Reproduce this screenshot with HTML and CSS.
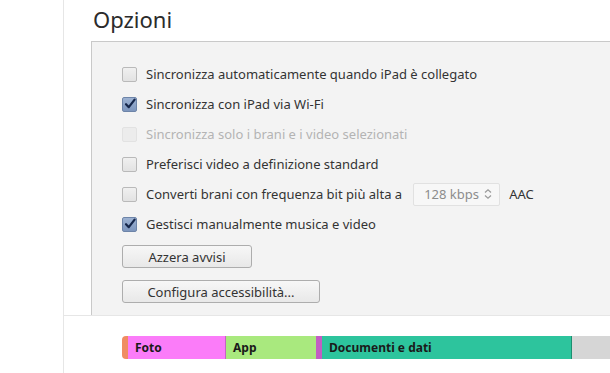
FILE: index.html
```html
<!DOCTYPE html>
<html lang="it">
<head>
    <meta charset="UTF-8">
    <meta name="viewport" content="width=device-width, initial-scale=1.0">
    <title>Opzioni</title>
    <link rel="stylesheet" href="styles.css">
</head>
<body>

<div class="page">
    <div class="sidebar"></div>

    <div class="main">
        <h2 class="title">Opzioni</h2>

        <div class="panel">
            <div class="option">
                <span class="check"></span>
                <span class="label">Sincronizza automaticamente quando iPad è collegato</span>
            </div>
            <div class="option">
                <span class="check checked">
                    <svg viewBox="0 0 14 14" width="14" height="14"><path d="M3 7.2 L5.8 10.2 L11.6 2.6" fill="none" stroke="#15264a" stroke-width="2.2" stroke-linecap="round" stroke-linejoin="round"/></svg>
                </span>
                <span class="label">Sincronizza con iPad via Wi-Fi</span>
            </div>
            <div class="option disabled">
                <span class="check"></span>
                <span class="label">Sincronizza solo i brani e i video selezionati</span>
            </div>
            <div class="option">
                <span class="check"></span>
                <span class="label">Preferisci video a definizione standard</span>
            </div>
            <div class="option">
                <span class="check"></span>
                <span class="label">Converti brani con frequenza bit più alta a</span>
                <span class="select">
                    <span class="select-value">128 kbps</span>
                    <svg viewBox="0 0 10 12" width="10" height="12"><path d="M2 4.5 L5 1.8 L8 4.5 M2 7.5 L5 10.2 L8 7.5" fill="none" stroke="#9a9a9a" stroke-width="1.2"/></svg>
                </span>
                <span class="label">AAC</span>
            </div>
            <div class="option">
                <span class="check checked">
                    <svg viewBox="0 0 14 14" width="14" height="14"><path d="M3 7.2 L5.8 10.2 L11.6 2.6" fill="none" stroke="#15264a" stroke-width="2.2" stroke-linecap="round" stroke-linejoin="round"/></svg>
                </span>
                <span class="label">Gestisci manualmente musica e video</span>
            </div>

            <div class="buttons">
                <button type="button" class="btn btn-small">Azzera avvisi</button>
                <button type="button" class="btn btn-wide">Configura accessibilità...</button>
            </div>
        </div>

        <div class="capacity">
            <div class="bar">
                <span class="seg seg-audio"></span>
                <span class="seg seg-photo" style="width: 98px">Foto</span>
                <span class="seg seg-app" style="width: 90px">App</span>
                <span class="seg seg-books" style="width: 6px"></span>
                <span class="seg seg-docs" style="width: 250px">Documenti e dati</span>
                <span class="seg seg-free"></span>
            </div>
        </div>
    </div>
</div>

</body>
</html>
```

FILE: styles.css
```css
body {
    margin: 0;
    padding: 0;
    background: #fff;
    font-family: 'Noto Sans', 'Open Sans', sans-serif;
    color: #333;
}
.page {
    display: flex;
    height: 373px;
    overflow: hidden;
}
.sidebar {
    width: 63px;
    flex-shrink: 0;
    border-right: 1px solid #e6e6e6;
}
.main {
    flex: 1;
    overflow: hidden;
}
.title {
    margin: 0;
    height: 41px;
    box-sizing: border-box;
    padding: 6px 0 0 29px;
    font-size: 22px;
    font-weight: normal;
    line-height: 26px;
    color: #2b2b2b;
}
.panel {
    margin-left: 27px;
    margin-right: -20px;
    padding: 17px 0 12px 30px;
    background: #f3f3f3;
    border-top: 1px solid #c9c9c9;
    border-left: 1px solid #c9c9c9;
}
.option {
    display: flex;
    align-items: center;
    gap: 9px;
    height: 30px;
    font-size: 13px;
    color: #333;
}
.option.disabled {
    color: #b4b4b4;
}
.check {
    width: 13px;
    height: 13px;
    flex-shrink: 0;
    border: 1px solid #b9b9b9;
    border-radius: 2px;
    background: linear-gradient(#f0f0f0, #e2e2e2);
    position: relative;
}
.option.disabled .check {
    border-color: #e2e2e2;
    background: #ececec;
}
.check.checked {
    border-color: #6d84a8;
    background: linear-gradient(#9db2d2, #7d96bd);
}
.check svg {
    position: absolute;
    left: 0;
    top: -1px;
}
.select {
    display: flex;
    align-items: center;
    justify-content: space-between;
    width: 87px;
    height: 23px;
    box-sizing: border-box;
    margin-left: 2px;
    padding: 0 6px 0 10px;
    background: #f7f7f7;
    border: 1px solid #e1e1e1;
    border-radius: 2px;
    color: #8c8c8c;
}
.buttons {
    display: flex;
    flex-direction: column;
    align-items: flex-start;
    gap: 12px;
    padding-top: 6px;
}
.btn {
    height: 23px;
    padding: 0;
    font-family: 'Noto Sans', 'Open Sans', sans-serif;
    font-size: 13px;
    color: #333;
    background: linear-gradient(#f7f7f7, #e8e8e8);
    border: 1px solid #adadad;
    border-radius: 3px;
}
.btn-small {
    width: 130px;
}
.btn-wide {
    width: 198px;
}
.capacity {
    border-top: 1px solid #e6e6e6;
    padding: 20px 0 0 58px;
}
.bar {
    display: flex;
    height: 23px;
    border-radius: 4px 0 0 4px;
    overflow: hidden;
}
.seg {
    display: flex;
    align-items: center;
    flex-shrink: 0;
    box-sizing: border-box;
    padding-left: 7px;
    font-size: 12px;
    font-weight: bold;
    color: #1a1a1a;
}
.seg-audio {
    width: 6px;
    padding: 0;
    background: #f08c62;
}
.seg-photo {
    background: #fb7cf9;
    border-right: 1px solid #c662c4;
}
.seg-app {
    background: #a9e97e;
}
.seg-books {
    padding: 0;
    background: #c25ec3;
}
.seg-docs {
    background: #2dc49d;
    border-right: 1px solid #1d8f70;
}
.seg-free {
    flex: 1;
    background: #d6d6d6;
}
```
